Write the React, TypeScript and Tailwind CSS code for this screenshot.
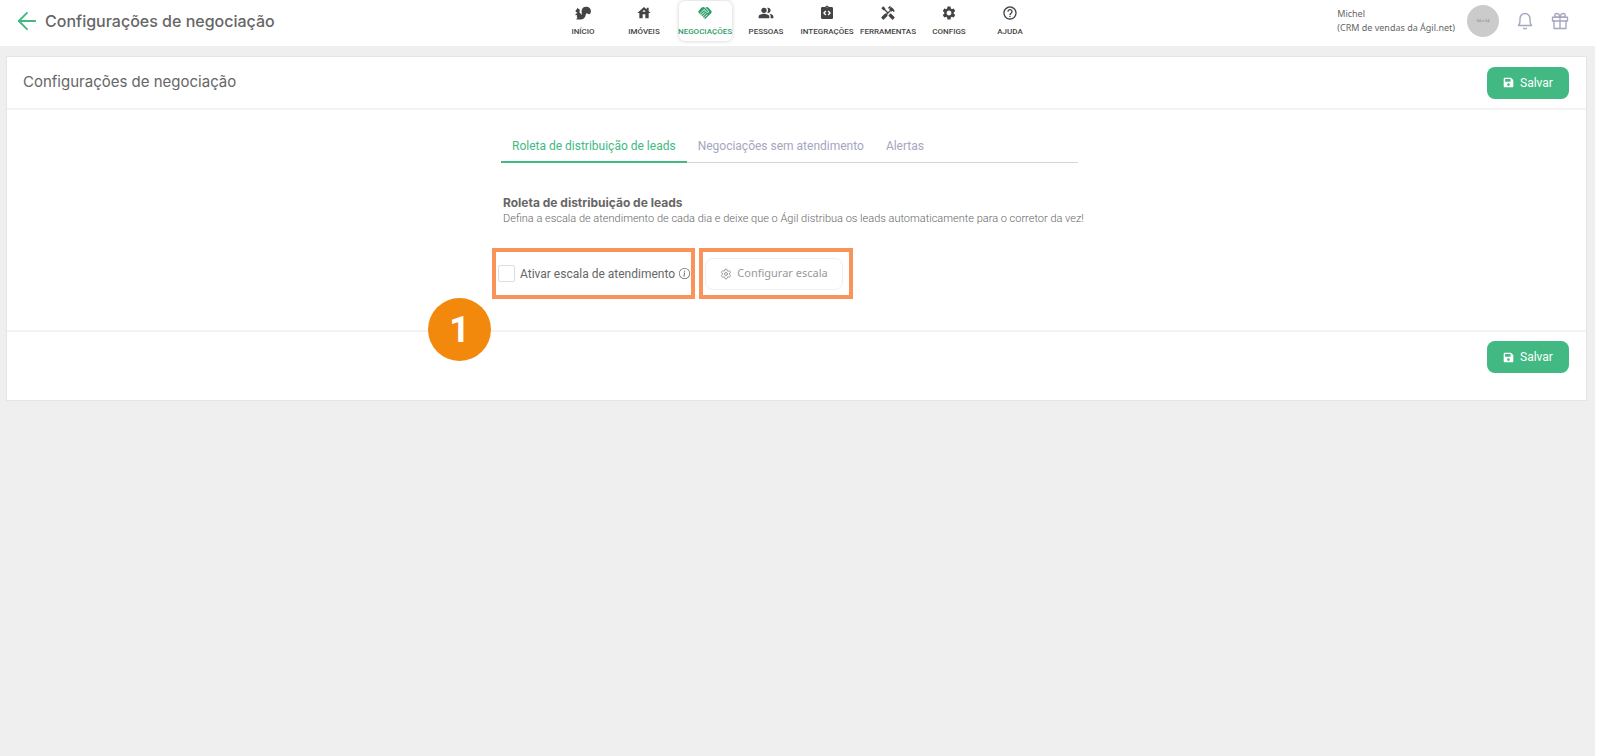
import { ArrowLeft, Settings } from "lucide-react"
import { BsInfoCircle } from "react-icons/bs"
import { FaSave } from "react-icons/fa"
import { FiGift } from "react-icons/fi"
import {
  MdHandshake,
  MdHandyman,
  MdHelpOutline,
  MdHouse,
  MdIntegrationInstructions,
  MdPeopleAlt,
  MdSettings,
} from "react-icons/md"

function SquirrelIcon({ className }: { className?: string }) {
  return (
    <svg viewBox="0 0 18 16" fill="currentColor" className={className} aria-hidden="true">
      <path d="M2.400 2 3.700 3.100C5 3.300 5.700 4.400 5.400 5.600L4.900 7.200C6 8 6.900 9 7.400 10.300 8 8.800 7.300 7.500 7.400 5.700 7.600 2.800 9.700 1 12.600 1 15.700 1 18 3.300 17.900 6.300 17.800 8.200 16.900 9.500 15.600 9.400 14.700 9.300 14.400 8.100 13.400 8.200 12 8.400 12.200 10.500 11.400 12.300 10.500 14.200 8.700 15.200 6.600 15.200H1.600C1.500 14.200 2.100 13.700 2.900 13.600 1.900 12.500 1.900 11.200 2.400 10.200L.7 10.400C.3 9.500.7 8.700 1.800 8.600L2.800 7.600C1.300 7.400.5 6.600.7 5.600.9 4.700 1.700 4.200 2.300 3.600Z" />
    </svg>
  )
}

function BellIcon({ className }: { className?: string }) {
  return (
    <svg viewBox="0 0 16 18" fill="none" stroke="currentColor" strokeWidth="1.4" strokeLinecap="round" strokeLinejoin="round" className={className} aria-hidden="true">
      <path d="M1.500 13.500C2.700 12.300 3 11 3 8.500V6.500a5 5 0 0 1 10 0v2c0 2.500.3 3.800 1.500 5ZM6.700 16.300c.7.700 1.900.7 2.600 0" />
    </svg>
  )
}

const NAV_ITEMS = [
  { label: "INÍCIO", icon: SquirrelIcon },
  { label: "IMÓVEIS", icon: MdHouse },
  { label: "NEGOCIAÇÕES", icon: MdHandshake, active: true },
  { label: "PESSOAS", icon: MdPeopleAlt },
  { label: "INTEGRAÇÕES", icon: MdIntegrationInstructions },
  { label: "FERRAMENTAS", icon: MdHandyman },
  { label: "CONFIGS", icon: MdSettings },
  { label: "AJUDA", icon: MdHelpOutline },
]

const TABS = ["Roleta de distribuição de leads", "Negociações sem atendimento", "Alertas"]

function SaveButton() {
  return (
    <button type="button" className="flex h-8 w-[82px] items-center justify-center gap-[6px] rounded-lg bg-[#42b983] text-xs text-white">
      <FaSave className="size-[11px]" />
      Salvar
    </button>
  )
}

function Header() {
  return (
    <header className="grid h-[46px] grid-cols-[1fr_auto_1fr] bg-white">
      <div className="flex items-center gap-1 pb-1 pl-[13px]">
        <a href="#" aria-label="Voltar" className="text-[#42b983]">
          <ArrowLeft className="size-7" strokeWidth={1.6} />
        </a>
        <h1 className="font-['Inter',sans-serif] text-base font-medium text-[#666]">Configurações de negociação</h1>
      </div>
      <nav className="flex gap-2 pt-px pr-[2px]">
        {NAV_ITEMS.map(({ label, icon: Icon, active }) => (
          <a
            key={label}
            href="#"
            className={`flex h-10 w-[53px] flex-col items-center rounded-md pt-1 text-[8px] leading-4 font-medium whitespace-nowrap ${
              active ? "text-[#2f9d69] shadow-[0_0_4px_rgba(0,0,0,0.2)]" : "text-[#444]"
            }`}
          >
            <Icon className="mb-[3px] size-4 shrink-0" />
            {label}
          </a>
        ))}
      </nav>
      <div className="flex items-center justify-end gap-[18px] pr-[26px] pb-1 text-[#a5a6c0]">
        <div className="-mr-[6px] font-['Noto_Sans',sans-serif] text-[9px] leading-[14px] text-[#666]">
          <p>Michel</p>
          <p>(CRM de vendas da Ágil.net)</p>
        </div>
        <div className="flex size-8 items-center justify-center rounded-full bg-[#cbcbcb] text-[4px] text-[#888]">54 × 54</div>
        <button type="button" aria-label="Notificações">
          <BellIcon className="h-[18px] w-4" />
        </button>
        <button type="button" aria-label="Novidades">
          <FiGift className="size-[18px]" strokeWidth={1.8} />
        </button>
      </div>
    </header>
  )
}

export default function App() {
  return (
    <div className="min-h-screen bg-white pr-[5px] font-['Roboto',sans-serif]">
      <div className="min-h-screen bg-[#efefef]">
        <Header />
        <main className="mt-[10px] mr-2 ml-[6px] border border-[#e4e4e4] bg-white">
          <div className="flex h-[53px] items-center justify-between border-b-2 border-[#f3f3f3] pr-[17px] pl-4">
            <h2 className="font-['Inter',sans-serif] text-[15px] text-[#666]">Configurações de negociação</h2>
            <SaveButton />
          </div>

          <div className="border-b-2 border-[#f3f3f3] pt-5 pr-[14px] pb-[31px]">
            <div className="mx-auto max-w-[577px]">
              <div role="tablist" className="flex border-b border-[#d5d5d5]">
                {TABS.map((tab, i) => (
                  <button
                    key={tab}
                    type="button"
                    role="tab"
                    aria-selected={i === 0}
                    className={`-mb-px h-[33px] border-b-2 px-[11px] text-xs ${
                      i === 0 ? "border-[#42b983] text-[#42b983]" : "border-transparent text-[#a5a6c0]"
                    }`}
                  >
                    {tab}
                  </button>
                ))}
              </div>

              <section className="pt-8 pl-[2px]">
                <h3 className="font-['Inter',sans-serif] text-xs leading-4 font-bold text-[#666]">
                  Roleta de distribuição de leads
                </h3>
                <p className="text-[11px] leading-4 font-light whitespace-nowrap text-[#666]">
                  Defina a escala de atendimento de cada dia e deixe que o Ágil distribua os leads automaticamente para o corretor da vez!
                </p>
              </section>

              <div className="relative mt-[21px] -ml-[9px] flex gap-1">
                <div className="flex h-[51px] w-[203px] items-center border-4 border-[#f9935a] pl-[2px] text-xs whitespace-nowrap text-[#666]">
                  <input id="escala" type="checkbox" className="size-[17px] shrink-0 appearance-none rounded-xs border border-[#ddd]" />
                  <label htmlFor="escala" className="pl-[5px]">
                    Ativar escala de atendimento
                  </label>
                  <BsInfoCircle className="ml-1 size-[11px] shrink-0" />
                </div>
                <div className="flex h-[51px] w-[154px] items-center border-4 border-[#f9935a] pl-[2px]">
                  <button type="button" className="flex h-8 w-[138px] items-center justify-center gap-[5px] rounded-lg border border-[#efefef] font-['Noto_Sans',sans-serif] text-[11px] text-[#999]">
                    <Settings className="size-3" />
                    Configurar escala
                  </button>
                </div>
                <div className="absolute top-[50px] -left-16 flex size-[63px] items-center justify-center rounded-full bg-[#f2890c]">
                  <span className="text-4xl font-bold text-white">1</span>
                </div>
              </div>
            </div>
          </div>

          <div className="flex h-[68px] justify-end pt-[9px] pr-[17px]">
            <SaveButton />
          </div>
        </main>
      </div>
    </div>
  )
}
